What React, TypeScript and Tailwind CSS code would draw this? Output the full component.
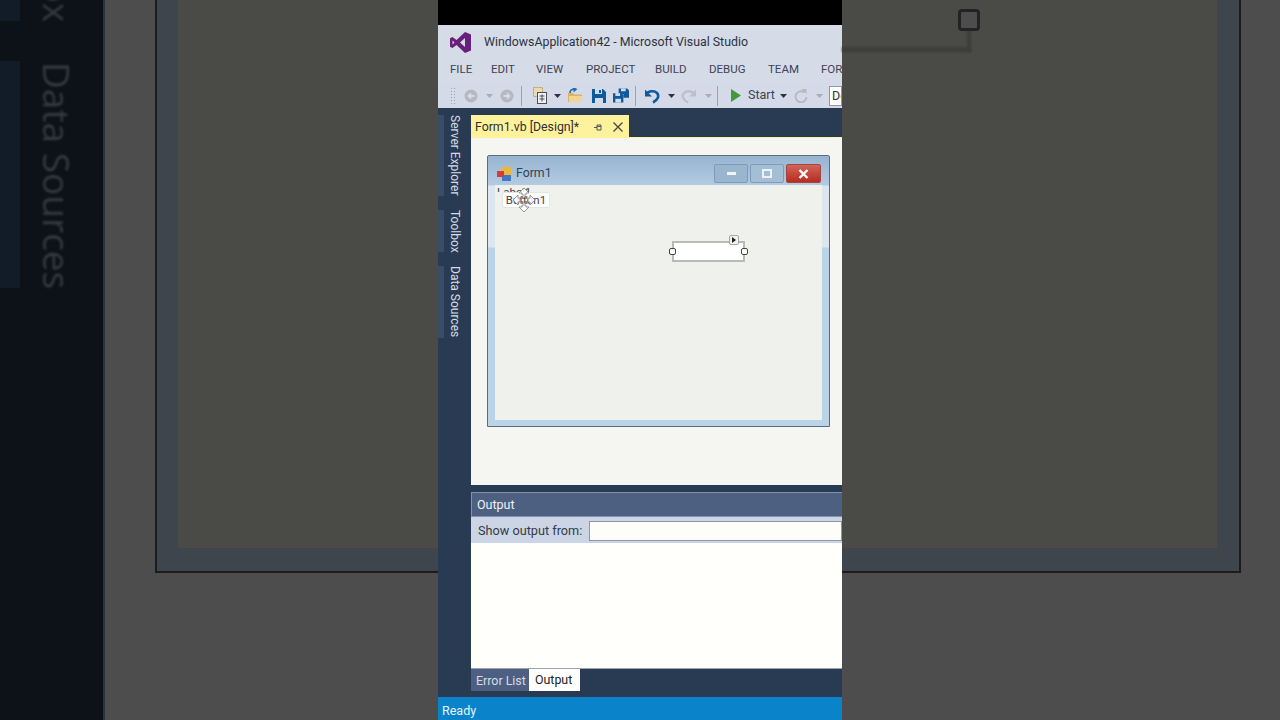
import React from 'react';

const font = "font-['Roboto','Open_Sans',sans-serif]";

const menus = [
  { name: 'FILE', cls: 'w-[41px]' },
  { name: 'EDIT', cls: 'w-[45px]' },
  { name: 'VIEW', cls: 'w-[50px]' },
  { name: 'PROJECT', cls: 'w-[69px]' },
  { name: 'BUILD', cls: 'w-[54px]' },
  { name: 'DEBUG', cls: 'w-[59px]' },
  { name: 'TEAM', cls: 'w-[53px]' },
  { name: 'FORMAT', cls: 'w-[60px]' },
];

const Caret = ({ light }: { light?: boolean }) => (
  <svg width="7" height="4" viewBox="0 0 7 4" className="shrink-0">
    <path d="M0 0h7L3.500 4z" fill={light ? '#a9aeb6' : '#2c3240'} />
  </svg>
);

const Sep = () => <div className="w-px h-[20px] shrink-0 bg-[#9aa3b3]" />;

// one toolbar slot, fixed width so the icons land where they do in the picture
const Slot = ({ w, children }: { w: string; children?: React.ReactNode }) => (
  <div className={`${w} h-full flex items-center justify-center shrink-0`}>{children}</div>
);

const Toolbar = () => (
  <div className="h-[25px] shrink-0 flex items-center bg-[#d4dae7] pl-[12px]">
    <div className="w-[6px] h-[18px] shrink-0 bg-[radial-gradient(#9aa1ac_1px,transparent_1px)] bg-[length:3px_3px]" />
    <Slot w="w-[5px]" />
    <Slot w="w-[20px]">
      <svg width="14" height="14" viewBox="0 0 14 14">
        <circle cx="7" cy="7" r="6.500" fill="#b4b9c0" />
        <path d="M10.500 7H5M7 4.500 4.500 7 7 9.500" stroke="#d8dce4" strokeWidth="1.800" fill="none" />
      </svg>
    </Slot>
    <Slot w="w-[16px]"><Caret light /></Slot>
    <Slot w="w-[20px]">
      <svg width="14" height="14" viewBox="0 0 14 14">
        <circle cx="7" cy="7" r="6.500" fill="#b4b9c0" />
        <path d="M3.500 7H9M7 4.500 9.500 7 7 9.500" stroke="#d8dce4" strokeWidth="1.800" fill="none" />
      </svg>
    </Slot>
    <Slot w="w-[4px]" />
    <Sep />
    <Slot w="w-[3px]" />
    <Slot w="w-[30px]">
      <svg width="15" height="17" viewBox="0 0 15 17">
        <rect x="0.500" y="0.500" width="9" height="9" fill="#e9d9b4" stroke="#b99a5c" strokeDasharray="2 1" />
        <rect x="4.500" y="5.500" width="9" height="11" fill="#eef1f6" stroke="#4a4f58" />
        <path d="M6.500 9h5M6.500 12h5M9 7.500v7" stroke="#4a4f58" />
      </svg>
    </Slot>
    <Slot w="w-[4px]"><Caret /></Slot>
    <Slot w="w-[32px]">
      <svg width="16" height="15" viewBox="0 0 16 15">
        <path d="M1 5h5l1 1.500h8V14H1z" fill="#d9b266" />
        <path d="M2 8h13v6H2z" fill="#f1d592" />
        <path d="M3 5c0-3 2-4 5-4M6 0l3 1.300L6.500 3.500" stroke="#1b6ca8" strokeWidth="1.600" fill="none" />
      </svg>
    </Slot>
    <Slot w="w-[16px]">
      <svg width="14" height="14" viewBox="0 0 14 14">
        <path d="M0 0h11l3 3v11H0z" fill="#0e5a9e" />
        <rect x="3" y="0" width="7" height="5" fill="#d4dae7" />
        <rect x="7" y="1" width="2" height="3" fill="#0e5a9e" />
        <rect x="3" y="9" width="8" height="5" fill="#d4dae7" />
      </svg>
    </Slot>
    <Slot w="w-[28px]">
      <svg width="16" height="15" viewBox="0 0 17 15">
        <path d="M6 0h9l2 2v8h-6V6H6z" fill="#0e5a9e" />
        <rect x="8.500" y="0" width="5" height="3" fill="#d4dae7" />
        <path d="M0 5h9l2 2v8H0z" fill="#0e5a9e" />
        <rect x="2.500" y="5" width="5" height="3" fill="#d4dae7" />
        <rect x="2.500" y="11" width="6" height="4" fill="#d4dae7" />
      </svg>
    </Slot>
    <Sep />
    <Slot w="w-[32px]">
      <svg width="16" height="16" viewBox="0 0 16 16">
        <path d="M2 6.500C4 3 10 2 13 5c2.500 2.700 1 7-4 9.500" stroke="#0e5a9e" strokeWidth="2.600" fill="none" />
        <path d="M1 1.500v7h7z" fill="#0e5a9e" />
      </svg>
    </Slot>
    <Slot w="w-[6px]"><Caret /></Slot>
    <Slot w="w-[30px]">
      <svg width="16" height="16" viewBox="0 0 16 16">
        <path d="M14 6.500C12 3 6 2 3 5c-2.500 2.700-1 7 4 9.500" stroke="#bcc1c9" strokeWidth="2.400" fill="none" />
        <path d="M15 1.500v7H8z" fill="#bcc1c9" />
      </svg>
    </Slot>
    <Slot w="w-[8px]"><Caret light /></Slot>
    <Slot w="w-[5px]" />
    <Sep />
    <Slot w="w-[7px]" />
    <Slot w="w-[22px]">
      <svg width="10" height="13" viewBox="0 0 10 13"><path d="M0 0l10 6.500L0 13z" fill="#3f9a3a" /></svg>
    </Slot>
    <Slot w="w-px" />
    <span className="w-[31px] shrink-0 text-[12.5px] text-[#3c4454]">Start</span>
    <Slot w="w-[8px]"><Caret /></Slot>
    <Slot w="w-[28px]">
      <svg width="14" height="14" viewBox="0 0 14 14">
        <path d="M10.500 3.500A5.500 5.500 0 1 0 12.500 8" stroke="#b4b9c0" strokeWidth="1.800" fill="none" />
        <path d="M7.500 0h5v5z" fill="#b4b9c0" />
      </svg>
    </Slot>
    <Slot w="w-[8px]"><Caret light /></Slot>
    <div className="ml-[6px] h-[20px] flex-1 border border-[#8f97a6] bg-white pl-[2px] text-[12.5px] leading-[18px] text-[#333] overflow-hidden">
      De
    </div>
  </div>
);

const FormWindow = () => (
  <div className="relative w-[343px] h-[272px] border border-[#5d6c78] rounded-t-[2px] px-[7px] pb-[6px] flex flex-col bg-[linear-gradient(180deg,#97b4d1_0,#b3cbe1_29px,#dbe6ee_30px,#dbe6ee_91px,#bbd3e7_92px)]">
    <div className="h-[29px] shrink-0 flex items-center pl-[2px] pt-[6px]">
      <svg width="14" height="14" viewBox="0 0 14 14">
        <rect x="5" y="0" width="9" height="8" fill="#eab63b" />
        <rect x="5" y="8" width="9" height="6" fill="#3d78c9" />
        <rect x="0" y="4" width="7" height="6" fill="#d83b32" />
      </svg>
      <span className="ml-[5px] text-[12.3px] text-[#2f4258]">Form1</span>
      <div className="ml-auto mr-[1px] flex gap-[2px]">
        <div className="w-[34px] h-[19px] flex items-center justify-center border border-[#7e9cb9] rounded-[2px] bg-[#9ab6cf]">
          <div className="w-[9px] h-[3px] bg-[#f1f4f7]" />
        </div>
        <div className="w-[34px] h-[19px] flex items-center justify-center border border-[#7e9cb9] rounded-[2px] bg-[#a4bed5]">
          <div className="w-[10px] h-[9px] border-2 border-[#eef2f5]" />
        </div>
        <div className="w-[35px] h-[19px] flex items-center justify-center border border-[#a5453c] rounded-[2px] bg-[linear-gradient(180deg,#d0655a,#b82c20)]">
          <svg width="11" height="10" viewBox="0 0 11 10"><path d="M1.500 1l8 8M9.500 1l-8 8" stroke="#fff" strokeWidth="2.400" /></svg>
        </div>
      </div>
    </div>

    <div className="relative flex-1 bg-[#eef1ec] text-[11.5px] text-[#444]">
      {/* controls on the form surface */}
      <div className="absolute left-[2px] top-0 h-[7px] overflow-hidden leading-[14px]">Label1</div>
      <div className="absolute left-[7px] top-[7px] w-[48px] h-[16px] bg-white/90 border border-[#e4e6e2] rounded-[2px] text-center leading-[15px]">
        Button1
      </div>
      <svg className="absolute left-[17px] top-[2px]" width="24" height="26" viewBox="0 0 24 26">
        <g fill="#ffffff" fillOpacity="0.85" stroke="#8a8c8d" strokeWidth="0.900" strokeLinejoin="round">
          <path d="M12 1l5 5h-3v2h-4V6H7z" />
          <path d="M12 25l5-5h-3v-2h-4v2H7z" />
          <path d="M1 13l5-5v3h2v4H6v3z" />
          <path d="M23 13l-5-5v3h-2v4h2v3z" />
        </g>
        <rect x="9" y="9" width="2.500" height="3" fill="#888" />
        <rect x="13" y="9" width="2.500" height="3" fill="#888" />
        <rect x="9" y="14" width="2.500" height="3" fill="#888" />
        <rect x="13" y="14" width="2.500" height="3" fill="#888" />
      </svg>

      <div className="absolute left-[177px] top-[56px] w-[73px] h-[21px] bg-white border-2 border-[#b8bbb6]" />
      <div className="absolute left-[174px] top-[63px] w-[7px] h-[7px] bg-white border border-[#444] rounded-[2px]" />
      <div className="absolute left-[246px] top-[63px] w-[7px] h-[7px] bg-white border border-[#444] rounded-[2px]" />
      <div className="absolute left-[234px] top-[50px] w-[10px] h-[10px] bg-[#f2f2f0] border border-[#a5a8a4] rounded-[2px] flex items-center justify-center">
        <svg width="4" height="6" viewBox="0 0 4 6"><path d="M0 0l4 3-4 3z" fill="#222" /></svg>
      </div>
    </div>
  </div>
);

const toolTabs = [
  { name: 'Server Explorer', cls: 'h-[81px] mb-[14px]' },
  { name: 'Toolbox', cls: 'h-[42px] mb-[14px]' },
  { name: 'Data Sources', cls: 'h-[72px]' },
];

const Center = () => (
  <div className="w-[404px] shrink-0 h-full flex flex-col overflow-hidden bg-[#293b52]">
    <div className="h-[25px] shrink-0 bg-black" />
    <div className="h-[30px] shrink-0 flex items-center bg-[#d6dbe8] pl-[12px] pt-[5px]">
      <svg width="21" height="21" viewBox="0 0 21 21">
        <path d="M15 0l6 2.500v16L15 21 6.500 13 2.500 16 0 14.700V6.300L2.500 5l4 3z" fill="#68217a" />
        <path d="M15 6 10 10.500 15 15zM2.500 8.500v4l2-2z" fill="#d6dbe8" />
      </svg>
      <span className="ml-[13px] text-[12.35px] text-[#2c3240] whitespace-nowrap">WindowsApplication42 - Microsoft Visual Studio</span>
    </div>
    <div className="h-[28px] shrink-0 flex items-center bg-[#d6dbe8] pl-[12px] pt-[1px] text-[11.5px] text-[#3c4454] whitespace-nowrap">
      {menus.map((m) => (
        <span key={m.name} className={`${m.cls} shrink-0`}>{m.name}</span>
      ))}
    </div>
    <Toolbar />

    <div className="flex-1 flex min-h-0">
      {/* vertical tool tabs */}
      <div className="w-[33px] shrink-0 pt-[7px] flex flex-col text-[12px] leading-[14px] text-[#d6dce6]">
        {toolTabs.map((t) => (
          <span key={t.name} className={`${t.cls} w-[24px] pl-[5px] border-l-[6px] border-[#3a4d68] whitespace-nowrap [writing-mode:vertical-rl]`}>
            {t.name}
          </span>
        ))}
      </div>

      <div className="flex-1 min-w-0 flex flex-col">
        <div className="h-[29px] shrink-0 pt-[7px]">
          <div className="w-[158px] h-[22px] flex items-center bg-[#fff29d] pl-[4px] pt-[2px] text-[12.3px] text-[#2c2f30]">
            <span className="w-[105px] shrink-0 whitespace-nowrap">Form1.vb [Design]*</span>
            <svg className="ml-[14px]" width="9" height="9" viewBox="0 0 9 9">
              <path d="M0 4.500h3M3 2v5h4V2zM3 3.500h4" stroke="#555" fill="none" />
            </svg>
            <svg className="ml-[10px]" width="10" height="10" viewBox="0 0 10 10">
              <path d="M.5.500l9 9M9.500.500l-9 9" stroke="#444" strokeWidth="1.300" />
            </svg>
          </div>
        </div>
        <div className="h-[348px] shrink-0 border-t border-[#fff29d] bg-[#f5f6f2] pt-[17px] pl-[16px]">
          <FormWindow />
        </div>

        <div className="h-[7px] shrink-0" />
        <div className="h-[25px] shrink-0 flex items-center bg-[#4d6082] border border-[#8293ad] border-r-0 pl-[5px] pt-[2px] text-[12.5px] text-[#eef1f5]">
          Output
        </div>
        <div className="h-[26px] shrink-0 flex items-center bg-[#ccd5e5] pl-[7px] pt-[1px] text-[12.7px] text-[#333b48]">
          <span className="w-[111px] shrink-0 whitespace-nowrap">Show output from:</span>
          <div className="flex-1 h-[20px] bg-[#fdfdfa] border border-[#8f97a6]" />
        </div>
        <div className="flex-1 bg-[#fffffc] border-b border-[#9aa3b3]" />
        <div className="h-[28px] shrink-0 flex items-start text-[12.4px] whitespace-nowrap">
          <div className="w-[58px] h-[22px] pl-[5px] leading-[24px] bg-[#4d6082] text-[#d6dce6]">Error List</div>
          <div className="w-[51px] h-[22px] pl-[6px] leading-[22px] bg-white text-[#222]">Output</div>
        </div>
      </div>
    </div>

    <div className="h-[23px] shrink-0 flex items-center bg-[#0a83cb] pl-[4px] pt-[6px] text-[12.5px] text-[#e8f3fa]">Ready</div>
  </div>
);

const SideLeft = () => (
  <div className="w-[438px] shrink-0 h-full flex bg-[#4d4d4d]">
    <div className="relative w-[105px] shrink-0 h-full bg-[#0d1219] border-r-2 border-[#2b343c] overflow-hidden">
      <div className="absolute left-0 top-0 w-[20px] h-[21px] bg-[#121c28]" />
      <div className="absolute left-0 top-[61px] w-[20px] h-[227px] bg-[#121c28]" />
      <div className="absolute left-[37px] top-[-40px] flex flex-col gap-[40px] text-[37px] leading-[40px] text-[#343a42] blur-[1px] font-['Open_Sans',sans-serif]">
        <span className="[writing-mode:vertical-rl] whitespace-nowrap h-[62px] overflow-hidden flex justify-end">Tox</span>
        <span className="[writing-mode:vertical-rl] whitespace-nowrap h-[230px]">Data Sources</span>
      </div>
    </div>
    <div className="flex-1 pl-[50px]">
      <div className="h-[573px] border-l-2 border-b-2 border-[#1b1c1c] bg-[#3e454c] pl-[21px] pb-[23px]">
        <div className="h-full bg-[#4a4b47]" />
      </div>
    </div>
  </div>
);

const SideRight = () => (
  <div className="relative w-[438px] shrink-0 h-full bg-[#4d4d4d]">
    <div className="w-[399px] h-[573px] border-r-2 border-b-2 border-[#1b1c1c] bg-[#3e454c] pr-[22px] pb-[23px]">
      <div className="h-full bg-[#4a4b47]" />
    </div>
    {/* selection handle from the enlarged form behind */}
    <div className="absolute left-0 top-[47px] w-[129px] h-[5px] bg-[#3d3d3b] blur-[1px]" />
    <div className="absolute left-[125px] top-[28px] w-[4px] h-[24px] bg-[#3d3d3b] blur-[1px]" />
    <div className="absolute left-[116px] top-[9px] w-[22px] h-[22px] rounded-[4px] border-[3px] border-[#232323] bg-[#4d4d4d] blur-[0.5px]" />
  </div>
);

export default function App() {
  return (
    <div className={`w-[1280px] h-[720px] flex overflow-hidden ${font}`}>
      <SideLeft />
      <Center />
      <SideRight />
    </div>
  );
}
